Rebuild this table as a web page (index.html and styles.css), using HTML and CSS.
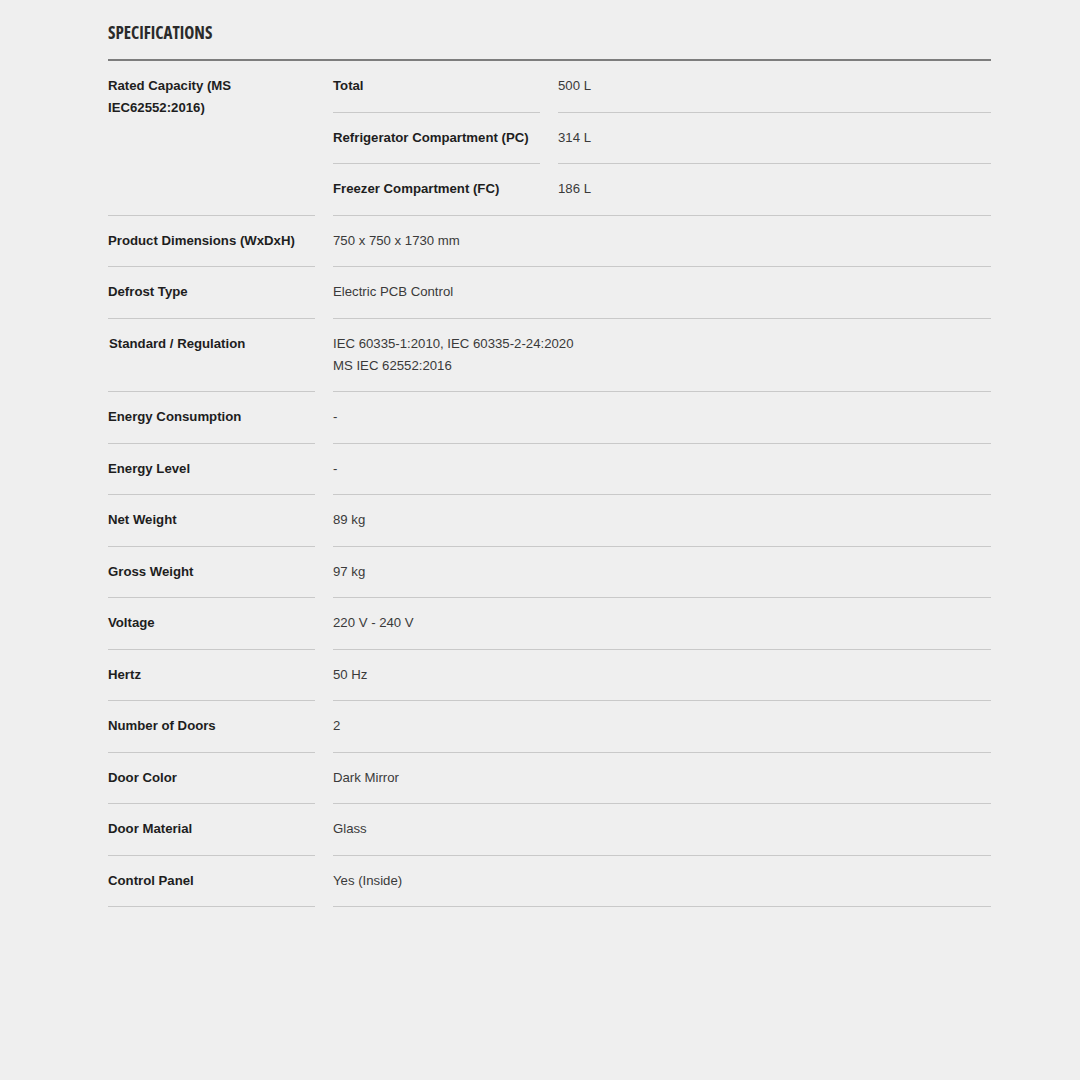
FILE: index.html
```html
<!DOCTYPE html>
<html>
<head>
<meta charset="utf-8">
<link rel="stylesheet" href="styles.css">
</head>
<body>
<div class="spec">
  <h2 class="spec-title">SPECIFICATIONS</h2>
  <div class="spec-table">
    <div class="row">
      <div class="label">Rated Capacity (MS IEC62552:2016)</div>
      <div class="value sub">
        <div class="subrow"><div class="label">Total</div><div class="value">500 L</div></div>
        <div class="subrow"><div class="label">Refrigerator Compartment (PC)</div><div class="value">314 L</div></div>
        <div class="subrow last"><div class="label">Freezer Compartment (FC)</div><div class="value">186 L</div></div>
      </div>
    </div>
    <div class="row"><div class="label">Product Dimensions (WxDxH)</div><div class="value">750 x 750 x 1730 mm</div></div>
    <div class="row"><div class="label">Defrost Type</div><div class="value">Electric PCB Control</div></div>
    <div class="row"><div class="label indent">Standard / Regulation</div><div class="value">IEC 60335-1:2010, IEC 60335-2-24:2020<br>MS IEC 62552:2016</div></div>
    <div class="row"><div class="label">Energy Consumption</div><div class="value">-</div></div>
    <div class="row"><div class="label">Energy Level</div><div class="value">-</div></div>
    <div class="row"><div class="label">Net Weight</div><div class="value">89 kg</div></div>
    <div class="row"><div class="label">Gross Weight</div><div class="value">97 kg</div></div>
    <div class="row"><div class="label">Voltage</div><div class="value">220 V - 240 V</div></div>
    <div class="row"><div class="label">Hertz</div><div class="value">50 Hz</div></div>
    <div class="row"><div class="label">Number of Doors</div><div class="value">2</div></div>
    <div class="row"><div class="label">Door Color</div><div class="value">Dark Mirror</div></div>
    <div class="row"><div class="label">Door Material</div><div class="value">Glass</div></div>
    <div class="row"><div class="label">Control Panel</div><div class="value">Yes (Inside)</div></div>
  </div>
</div>
</body>
</html>
```
FILE: styles.css
```css
html, body {
  margin: 0;
  padding: 0;
  background: #efefef;
}
body {
  font-family: "Liberation Sans", Arial, sans-serif;
  font-size: 13.2px;
  color: #333;
}
.spec {
  width: 883px;
  margin-left: 108px;
  padding-top: 21px;
}
.spec-title {
  margin: 0;
  font-family: "Open Sans", sans-serif;
  font-stretch: 75%;
  font-weight: 700;
  font-size: 17px;
  line-height: 24px;
  color: #2a2a2a;
  padding-bottom: 14px;
  border-bottom: 2px solid #7d7d7d;
}
.row {
  display: grid;
  grid-template-columns: 207px 1fr;
  column-gap: 18px;
}
.row > .label,
.row > .value:not(.sub),
.subrow > .label,
.subrow > .value {
  padding: 14px 0 14.1px;
  line-height: 22.4px;
  border-bottom: 1px solid #c9c9c9;
}
.row > .value.sub {
  border-bottom: 1px solid #c9c9c9;
}
.subrow {
  display: grid;
  grid-template-columns: 207px 1fr;
  column-gap: 18px;
}
.subrow.last > .label,
.subrow.last > .value {
  border-bottom: none;
}
.label {
  font-weight: 700;
  color: #1e1e1e;
}
.label.indent {
  padding-left: 1px;
}
.value {
  color: #3a3a3a;
}
```
